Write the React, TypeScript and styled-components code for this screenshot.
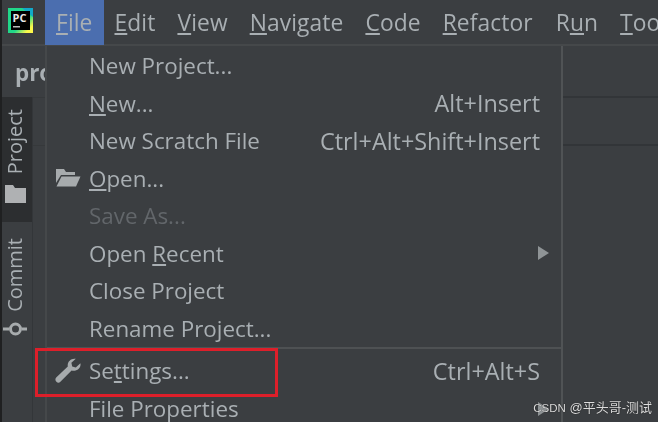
import { FunctionComponent } from 'react';
import styled, { createGlobalStyle } from 'styled-components';

const menuFont = '"Open Sans", "Noto Sans", sans-serif';

type Item = {
    label: string;
    mnemonic?: number;
    shortcut?: string;
    icon?: 'folder' | 'wrench';
    disabled?: boolean;
    submenu?: boolean;
    separatorBefore?: boolean;
};

const topMenus = [
    { label: 'File', mnemonic: 0 },
    { label: 'Edit', mnemonic: 0 },
    { label: 'View', mnemonic: 0 },
    { label: 'Navigate', mnemonic: 0 },
    { label: 'Code', mnemonic: 0 },
    { label: 'Refactor', mnemonic: 0 },
    { label: 'Run', mnemonic: 1 },
    { label: 'Tools', mnemonic: 0 },
];

const items: Item[] = [
    { label: 'New Project...' },
    { label: 'New...', mnemonic: 0, shortcut: 'Alt+Insert' },
    { label: 'New Scratch File', shortcut: 'Ctrl+Alt+Shift+Insert' },
    { label: 'Open...', mnemonic: 0, icon: 'folder' },
    { label: 'Save As...', disabled: true },
    { label: 'Open Recent', mnemonic: 5, submenu: true },
    { label: 'Close Project' },
    { label: 'Rename Project...' },
    { label: 'Settings...', mnemonic: 2, shortcut: 'Ctrl+Alt+S', icon: 'wrench', separatorBefore: true },
    { label: 'File Properties', submenu: true },
];

const Mnemonic: FunctionComponent<{ label: string; index?: number }> = ({ label, index }) => {
    if (index === undefined) return <>{label}</>;
    return (
        <>
            {label.slice(0, index)}
            <u>{label[index]}</u>
            {label.slice(index + 1)}
        </>
    );
};

const PyCharmLogo = () => (
    <svg width="25" height="25" viewBox="0 0 25 25">
        <defs>
            <linearGradient id="pc-edge" x1="0" y1="0" x2="1" y2="1">
                <stop offset="0" stopColor="#21d789" />
                <stop offset="0.6" stopColor="#21d789" />
                <stop offset="0.85" stopColor="#fcf84a" />
            </linearGradient>
        </defs>
        <rect width="25" height="25" fill="url(#pc-edge)" />
        <path d="M14 0h11v9z" fill="#12a9c9" />
        <rect x="3" y="3" width="19" height="19" fill="#000" />
        <text x="4.5" y="13.5" fontFamily={menuFont} fontSize="11" fontWeight="700" fill="#e8e8e8">
            PC
        </text>
        <rect x="5" y="18" width="7" height="1.5" fill="#bbb" />
    </svg>
);

const FolderIcon = () => (
    <svg width="26" height="20" viewBox="0 0 26 20">
        <path d="M1 1h8l2 3h9v3H6L1 15z" fill="#a7abad" />
        <path d="M6.5 8.5H25.5L21 18.5H1.5z" fill="#a7abad" />
    </svg>
);

const WrenchIcon = () => (
    <svg width="26" height="26" viewBox="0 0 26 26">
        <path
            d="M25.4 5.2 L20.8 9.4 L17.2 8.4 L16.4 4.8 L20.8 0.8 C16.4 -0.2 12 3.4 12.8 8.6 L1.2 19.6 C0 20.8 0.2 22.6 1.4 23.8 C2.6 25 4.2 25 5.4 23.8 L16.6 12.6 C22 13.8 26.4 9.8 25.4 5.2 Z"
            fill="#a7abad"
        />
    </svg>
);

const CommitIcon = () => (
    <svg width="24" height="16" viewBox="0 0 24 16">
        <circle cx="12.5" cy="8" r="5" fill="none" stroke="#a7abad" strokeWidth="3" />
        <path d="M0 8h6M19 8h5" stroke="#a7abad" strokeWidth="3" />
    </svg>
);

const ProjectFolderIcon = () => (
    <svg width="21" height="18" viewBox="0 0 21 18">
        <path d="M0 0h8l2 3h11v15H0z" fill="#afb1b3" />
    </svg>
);

const App: FunctionComponent = () => (
    <>
        <GlobalStyle />
        <Screen>
            <MenuBar>
                <LogoCell>
                    <PyCharmLogo />
                </LogoCell>
                {topMenus.map((menu, i) => (
                    <TopMenu key={menu.label} $active={i === 0}>
                        <Mnemonic label={menu.label} index={menu.mnemonic} />
                    </TopMenu>
                ))}
            </MenuBar>
            <Body>
                <LeftColumn>
                    <ProjectTitle>pro</ProjectTitle>
                    <SideArea>
                        <Sidebar>
                            <ActiveSideTab>
                                <SideLabel>Project</SideLabel>
                                <ProjectFolderIcon />
                            </ActiveSideTab>
                            <SideTab>
                                <SideLabel>Commit</SideLabel>
                                <CommitIcon />
                            </SideTab>
                        </Sidebar>
                        <Gutter />
                    </SideArea>
                </LeftColumn>
                <Dropdown>
                    {items.map((item) => (
                        <Row key={item.label} $separator={item.separatorBefore} $disabled={item.disabled}>
                            <IconSlot>
                                {item.icon === 'folder' && <FolderIcon />}
                                {item.icon === 'wrench' && <WrenchIcon />}
                            </IconSlot>
                            <Label>
                                <Mnemonic label={item.label} index={item.mnemonic} />
                            </Label>
                            {item.shortcut && <Shortcut>{item.shortcut}</Shortcut>}
                            {item.submenu && <Arrow />}
                        </Row>
                    ))}
                </Dropdown>
                <Editor>
                    <EditorHeader />
                    <EditorTabs />
                </Editor>
            </Body>
            <Highlight />
            <Watermark>
                <WatermarkBrand>CSDN</WatermarkBrand> @平头哥-测试
            </Watermark>
        </Screen>
    </>
);

export default App;

const GlobalStyle = createGlobalStyle`
    html, body {
        margin: 0;
        padding: 0;
        background: #3b3e41;
    }
`;

const Screen = styled.div`
    position: relative;
    width: 658px;
    height: 422px;
    overflow: hidden;
    box-sizing: border-box;
    border-left: 2px solid #1f2021;
    background: #3b3e41;
    color: #a9afb3;
    font-family: ${menuFont};
    font-size: 22.4px;
`;

const MenuBar = styled.div`
    display: flex;
    height: 46px;
    margin-left: -2px;
    box-sizing: border-box;
    border-bottom: 2px solid #45484a;
    filter: blur(0.6px);
`;

const LogoCell = styled.div`
    display: flex;
    flex: none;
    align-items: center;
    width: 45px;
    height: 41px;
    padding: 0 0 0 8px;
    box-sizing: border-box;
`;

const TopMenu = styled.div<{ $active?: boolean }>`
    display: flex;
    flex: none;
    align-items: center;
    height: 45px;
    padding: 0 11px;
    font-size: 22.8px;
    letter-spacing: 0.1px;
    background: ${({ $active }) => ($active ? '#4b6eaf' : 'transparent')};
    white-space: nowrap;
    box-sizing: border-box;

    &:nth-child(8) {
        margin-left: 1px;
    }
`;

const Body = styled.div`
    display: flex;
    height: 376px;
`;

const LeftColumn = styled.div`
    display: flex;
    flex-direction: column;
    width: 43px;
    flex: none;
    filter: blur(0.6px);
`;

const ProjectTitle = styled.div`
    height: 51px;
    line-height: 53px;
    padding-left: 13px;
    font-weight: 700;
    overflow: hidden;
    white-space: nowrap;
`;

const SideArea = styled.div`
    display: flex;
    flex: 1;
`;

const Sidebar = styled.div`
    display: flex;
    flex-direction: column;
    width: 30px;
    flex: none;
    border-right: 1px solid #333639;
`;

const SideTab = styled.div`
    display: flex;
    flex-direction: column;
    align-items: center;
    gap: 9px;
    padding: 16px 4px 0 0;
    box-sizing: border-box;
`;

const ActiveSideTab = styled(SideTab)`
    height: 125px;
    gap: 11px;
    padding-top: 12px;
    background: #2c2e30;
`;

const Gutter = styled.div`
    flex: 1;
    height: 47px;
    border-top: 1px solid #36393b;
    border-bottom: 1px solid #36393b;
`;

const SideLabel = styled.span`
    writing-mode: vertical-rl;
    transform: rotate(180deg);
    font-size: 20px;
    line-height: 24px;
`;

const Dropdown = styled.div`
    display: flex;
    flex-direction: column;
    width: 518px;
    flex: none;
    padding-top: 1px;
    box-sizing: border-box;
    border-left: 2px solid #45484a;
    border-right: 2px solid #505355;
    filter: blur(0.6px);
`;

const Row = styled.div<{ $separator?: boolean; $disabled?: boolean }>`
    display: flex;
    align-items: center;
    flex: none;
    height: 37.5px;
    box-sizing: border-box;
    padding-right: 21px;
    color: ${({ $disabled }) => ($disabled ? '#62666a' : 'inherit')};
    ${({ $separator }) =>
        $separator &&
        `
        height: 43px;
        border-top: 2px solid #4e5153;
        padding-top: 2px;
    `}
`;

const IconSlot = styled.div`
    display: flex;
    justify-content: center;
    width: 42px;
    flex: none;
`;

const Label = styled.span`
    flex: 1;
    white-space: nowrap;
`;

const Shortcut = styled.span`
    font-size: 23.4px;
    white-space: nowrap;
`;

const Arrow = styled.span`
    width: 0;
    height: 0;
    margin-right: -9px;
    border-left: 11px solid #8f9496;
    border-top: 7px solid transparent;
    border-bottom: 7px solid transparent;
`;

const Editor = styled.div`
    flex: 1;
    filter: blur(0.6px);
`;

const EditorHeader = styled.div`
    height: 50px;
    border-bottom: 2px solid #323538;
`;

const EditorTabs = styled.div`
    height: 46px;
    border-bottom: 2px solid #323538;
`;

const Highlight = styled.div`
    position: absolute;
    left: 33px;
    top: 348px;
    width: 243px;
    height: 49px;
    box-sizing: border-box;
    border: 3px solid #dd1f2a;
`;

const Watermark = styled.div`
    position: absolute;
    right: 6px;
    bottom: 6px;
    font-family: "Liberation Sans", "Noto Sans CJK SC", sans-serif;
    font-size: 13px;
    color: #dcdcdc;
    text-shadow: 0 0 1px #111;
    white-space: nowrap;
`;

const WatermarkBrand = styled.span`
    font-size: 11.5px;
`;
